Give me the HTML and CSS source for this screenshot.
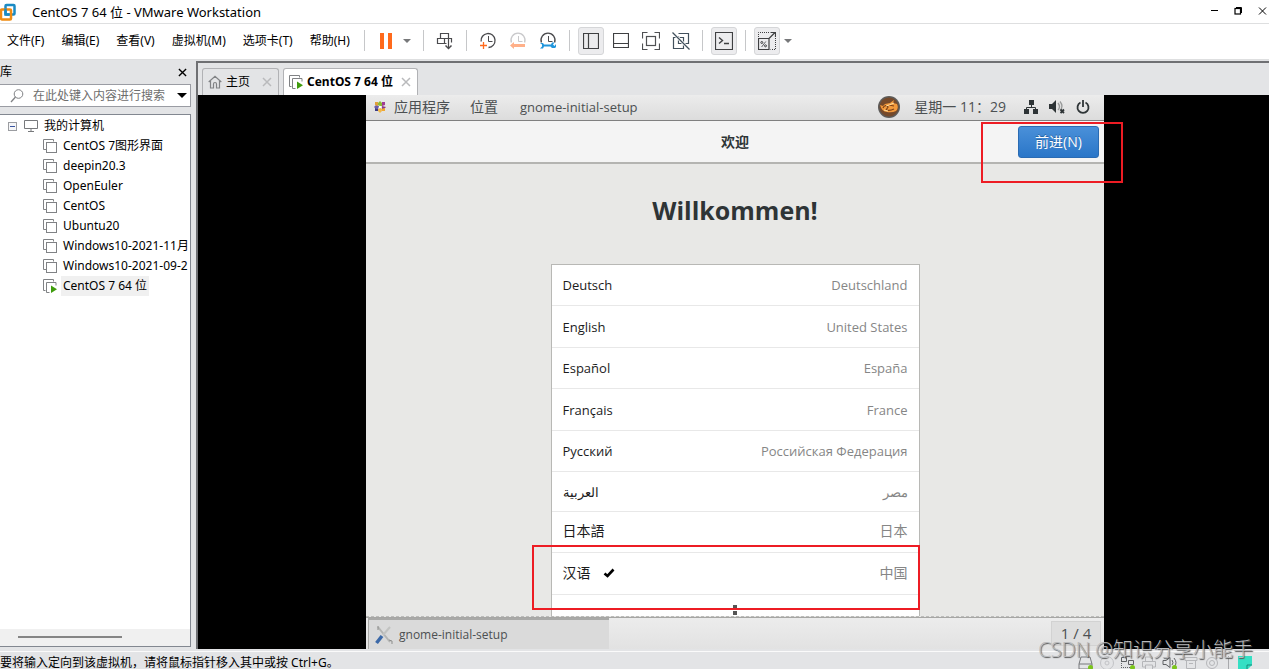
FILE: index.html
```html
<!DOCTYPE html>
<html lang="zh-CN">
<head>
<meta charset="utf-8">
<title>CentOS 7 64 位 - VMware Workstation</title>
<link rel="stylesheet" href="styles.css">
</head>
<body>
<svg class="defs" width="0" height="0" aria-hidden="true">
  <symbol id="vm" viewBox="0 0 14 14"><path d="M3.5 10.5h-3v-10h10v2" fill="none" stroke="#808285"/><rect x="3.500" y="3.500" width="10" height="10" fill="#fff" stroke="#808285"/></symbol>
  <symbol id="vmrun" viewBox="0 0 14 14"><path d="M2.500 11.500h-2v-11h10v2M6.500 13.500h-3v-10h9.500v3" fill="none" stroke="#808285"/><path d="M8 6.500l6 3.700-6 3.800z" fill="#3f9c0d"/></symbol>
  <symbol id="x" viewBox="0 0 10 10"><path d="M1 1l8 8M9 1L1 9" fill="none" stroke="currentColor" stroke-width="1.500"/></symbol>
  <symbol id="caret" viewBox="0 0 8 4"><path d="M0 0h8L4 4z" fill="currentColor"/></symbol>
</svg>
<div class="app">
  <header class="titlebar">
    <svg class="logo" width="17" height="18" viewBox="0 0 17 18" fill="none"><rect x="5.500" y="2" width="9" height="9.500" rx="1" stroke="#1a8bc4" stroke-width="2.500"/><rect x="1" y="6.500" width="10" height="10" rx="1" stroke="#f08c12" stroke-width="2.500"/><path d="M5.500 5.500v6h4" stroke="#1a8bc4" stroke-width="2.500"/></svg>
    <h1 class="title">CentOS 7 64 位 - VMware Workstation</h1>
    <div class="winctl">
      <button aria-label="最小化"><svg width="8" height="8"><path d="M0 3.500h7" stroke="#000"/></svg></button>
      <button aria-label="还原"><svg width="9" height="8" fill="none" stroke="#000"><path d="M2 .5h5.500V6"/><rect x="1" y="1.500" width="5.500" height="5.500" stroke-width="1.200"/></svg></button>
      <button aria-label="关闭"><svg width="9" height="8"><path d="M1 .5l7 7M8 .5l-7 7" stroke="#000"/></svg></button>
    </div>
  </header>

  <div class="menubar">
    <nav class="menus">
      <button>文件(F)</button><button>编辑(E)</button><button>查看(V)</button><button>虚拟机(M)</button><button>选项卡(T)</button><button>帮助(H)</button>
    </nav>
    <div class="tools">
      <span class="sep"></span>
      <button class="tool" aria-label="挂起"><svg width="14" height="16"><path d="M1 0h4v16H1zM9 0h4v16H9z" fill="#ff6a1c"/></svg></button>
      <button class="drop" aria-label="电源选项"><svg width="8" height="4"><use href="#caret"/></svg></button>
      <span class="sep"></span>
      <button class="tool" aria-label="发送 Ctrl+Alt+Del"><svg width="18" height="18" fill="none" stroke="#4a4a4d"><path d="M4.500 1.500h8v5h-8zM8.500 6.500h7v4M8.500 6.500v5h-7v-5h3M8.500 11.500h2M12.500 7v9" stroke-width="1.200"/><path d="M9.500 13.500l3 3 3-3" stroke-width="1.500"/></svg></button>
      <span class="sep"></span>
      <button class="tool" aria-label="拍摄快照"><svg width="18" height="18" fill="none" stroke="#4a4a4d"><path d="M2.100 9.500A7 7 0 1 1 9.500 15.500" stroke-width="1.300"/><path d="M9.500 4v5.500h4"/><path d="M1 13.500h7M4.500 10v7" stroke="#ff6a1c" stroke-width="1.300"/></svg></button>
      <button class="tool" aria-label="恢复快照"><svg width="18" height="18" fill="none" stroke="#c9c9cb"><path d="M2.400 10.500A7 7 0 1 1 15.600 10.500" stroke-width="1.300"/><path d="M9.500 4v5.500h4"/><path d="M1 13.500l4-3.500v2h11v3H5v2z" fill="#ffb089" stroke="none"/></svg></button>
      <button class="tool" aria-label="管理快照"><svg width="18" height="18" fill="none" stroke="#4a4a4d"><path d="M2.400 10.500A7 7 0 1 1 15.600 10.500" stroke-width="1.300"/><path d="M9.500 4v5.500h4"/><path d="M1 11h3l1 1.500h7l1-2h2.500l-1.500 2 1.500 1.500L17 12v3l-1 1h-3l-1.500-1.500H5L4 16.500H1l2-2v-2z" fill="#2196dc" stroke="none"/></svg></button>
      <span class="sep"></span>
      <button class="tool on" aria-label="显示库"><svg width="16" height="16" fill="none" stroke="#3f4042"><path d="M.5.500h15v15H.5zM5.500.5v15" stroke-width="1.200"/></svg></button>
      <button class="tool" aria-label="缩略图栏"><svg width="16" height="16" fill="none" stroke="#3f4042"><path d="M.5.500h15v14H.5zM.5 10.500h15" stroke-width="1.200"/></svg></button>
      <button class="tool" aria-label="全屏"><svg width="18" height="18" fill="none" stroke="#4f5052"><path d="M.5 6.500v-6h5M12.500.5h5v6M.5 11.500v6h5M12.500 17.500h5v-6" stroke-width="1.200"/><rect x="4.500" y="4.500" width="9" height="9" stroke-width="1.200"/></svg></button>
      <button class="tool" aria-label="Unity"><svg width="18" height="18" fill="none" stroke="#41505c"><path d="M6.500 1.500h10v10h-5M6.500 4v7.500h5M4.500 5.500h-3v11h10v-11h-4" stroke-width="1.200"/><path d="M.5.500l17 17" stroke="#fff" stroke-width="3"/><path d="M.5.500l17 17" stroke-width="1.300"/></svg></button>
      <span class="sep"></span>
      <button class="tool on" aria-label="控制台"><svg width="18" height="18" fill="none" stroke="#3f4042"><path d="M.5.500h17v17H.5z" stroke-width="1.200"/><path d="M4 5.500l3.500 3L4 11.500M9 11.500h5" stroke-width="1.400"/></svg></button>
      <span class="sep"></span>
      <button class="tool on" aria-label="缩放"><svg width="18" height="18" fill="none" stroke="#3f4042"><path d="M.5 6.500h10.500v11H.5zM11 6.500l6-6M13 .5h4.500V5" stroke-width="1.200"/><path d="M.5 5V.5h12M17.500 6v11.500h-5" stroke-dasharray="1 1"/><circle cx="3.800" cy="10.500" r="1"/><circle cx="7.500" cy="13.800" r="1"/><path d="M7.800 9.500l-4.200 5.500" stroke-width=".8"/></svg></button>
      <button class="drop" aria-label="缩放选项"><svg width="8" height="4"><use href="#caret"/></svg></button>
    </div>
  </div>

  <div class="main">
    <aside class="library">
      <div class="libhead"><h2>库</h2><button aria-label="关闭库"><svg width="9" height="9"><use href="#x"/></svg></button></div>
      <div class="search">
        <svg width="14" height="14" fill="none" stroke="#808285"><circle cx="8.500" cy="5" r="4.300"/><path d="M5.500 8L1 13" stroke-width="1.300"/></svg>
        <input type="text" aria-label="搜索" placeholder="在此处键入内容进行搜索">
        <button aria-label="搜索选项"><svg width="10" height="5"><use href="#caret"/></svg></button>
      </div>
      <div class="tree">
        <div class="root"><svg width="9" height="9"><rect x=".5" y=".5" width="8" height="8" fill="#f5f6f8" stroke="#9b9da1"/><path d="M2 4.500h5" stroke="#3a55a0"/></svg><svg width="14" height="12" fill="none" stroke="#77797c"><path d="M.5.500h13v8H.5zM7 9v2M4 11.500h6"/></svg><span>我的计算机</span></div>
        <ul>
          <li><svg><use href="#vm"/></svg><span>CentOS 7图形界面</span></li>
          <li><svg><use href="#vm"/></svg><span>deepin20.3</span></li>
          <li><svg><use href="#vm"/></svg><span>OpenEuler</span></li>
          <li><svg><use href="#vm"/></svg><span>CentOS</span></li>
          <li><svg><use href="#vm"/></svg><span>Ubuntu20</span></li>
          <li><svg><use href="#vm"/></svg><span>Windows10-2021-11月</span></li>
          <li><svg><use href="#vm"/></svg><span>Windows10-2021-09-2</span></li>
          <li class="selected"><svg><use href="#vmrun"/></svg><span>CentOS 7 64 位</span></li>
        </ul>
        <div class="hscroll"><div class="thumb"></div></div>
      </div>
    </aside>

    <section class="workspace">
      <div class="tabs">
        <div class="tab"><svg width="14" height="14" fill="none" stroke="#808285" stroke-width="1.200"><path d="M.7 7L7 1.200 13.300 7M2.500 6v7h3V9q0-1.500 1.500-1.500T8.500 9v4h3V6"/></svg><span>主页</span><button aria-label="关闭主页"><svg width="10" height="10"><use href="#x"/></svg></button></div>
        <div class="tab active"><svg width="14" height="14"><use href="#vmrun"/></svg><span>CentOS 7 64 位</span><button aria-label="关闭标签"><svg width="10" height="10"><use href="#x"/></svg></button></div>
      </div>
      <div class="console">
        <div class="guest">
          <div class="topbar">
            <svg width="12" height="12"><path d="M6 0l2 2v3H6L4 4V2z" fill="#8dbb35"/><path d="M8 1h3v3L8 5z" fill="#a03c96"/><path d="M8 5l4 1-2 2H8z" fill="#8a3a8c"/><path d="M7 8l4-1v3H8z" fill="#f0a832"/><path d="M4 8l3-1 1 3-2 2-2-2z" fill="#f2b84a"/><path d="M1 7h3v3H1z" fill="#3c3c84"/><path d="M0 6l2-2 3 1-1 3H2z" fill="#6b5ba8"/><path d="M1 1h3v4L1 4z" fill="#e0a03a"/><path d="M5 5h2v2H5z" fill="#fff"/></svg>
            <span>应用程序</span><span class="places">位置</span><span class="running">gnome-initial-setup</span>
            <svg class="ime" width="22" height="22"><circle cx="11" cy="11" r="11" fill="#5d5b59"/><circle cx="11" cy="11" r="9.500" fill="#75492a"/><path d="M2 9l3 1 2-2 5-1 4-3-1 3 4 1q2 4-1 7-4 2-9 1-5 0-7-7z" fill="#f39a3c"/><path d="M5 12q2-4 5-1l-2 3q4 1 8-1M11 9l5 1" stroke="#7c4016" stroke-width="1.200" fill="none"/><path d="M8 10l3-1 5-2M6 14l4 1" stroke="#ffe0a0" fill="none"/></svg>
            <span class="clock">星期一 11：29</span>
            <div class="tray">
              <svg width="14" height="14" fill="#2e3436"><path d="M5 0h5v5H5zM0 9h5v5H0zM9 9h5v5H9z"/><path d="M7.500 5v3M2.500 9V7.500h9V9" fill="none" stroke="#2e3436"/></svg>
              <svg width="16" height="14"><path d="M0 4h3l4-4v13L3 9H0z" fill="#2e3436"/><path d="M9 3q3 4 0 7M11 1.500q4 5 0 9" fill="none" stroke="#999b9b" stroke-width="1.300"/><path d="M11.500 9.500l3.500 3.500M15 9.500l-3.500 3.500" stroke="#2e3436" stroke-width="1.800"/></svg>
              <svg width="14" height="14" fill="none" stroke="#2e3436" stroke-width="1.800"><path d="M4.500 2.500a5.500 5.500 0 1 0 5 0M7 0v7"/></svg>
            </div>
          </div>
          <div class="headerbar"><span></span><strong>欢迎</strong><button class="next">前进(N)</button></div>
          <div class="content">
            <h2>Willkommen!</h2>
            <div class="langbox">
              <ul class="langs">
                <li><span>Deutsch</span><em>Deutschland</em></li>
                <li><span>English</span><em>United States</em></li>
                <li><span>Español</span><em>España</em></li>
                <li><span>Français</span><em>France</em></li>
                <li><span>Русский</span><em>Российская Федерация</em></li>
                <li class="arabic"><span lang="ar">العربية</span><em lang="ar">مصر</em></li>
                <li class="cjk"><span>日本語</span><em>日本</em></li>
                <li class="cjk"><span>汉语</span><svg width="12" height="10"><path d="M1.500 5.500L4.500 8 10.500 1.500" fill="none" stroke="#000" stroke-width="2.600"/></svg><em>中国</em></li>
                <li class="more"><svg width="4" height="10"><path d="M0 0h4v4H0zM0 6h4v4H0z" fill="#555"/></svg></li>
              </ul>
              <div class="mark mark-lang"></div>
            </div>
          </div>
          <div class="taskbar">
            <button class="task"><svg width="18" height="20" fill="none"><path d="M3 2l12 15" stroke="#b4b5b3" stroke-width="2"/><path d="M15 2L8 10" stroke="#c2c3c1" stroke-width="2"/><path d="M1.500 18L7 11" stroke="#3c69a8" stroke-width="3.500"/><path d="M14 15l3 1v3M3 5V1" stroke="#8c8d8b"/></svg>gnome-initial-setup</button>
            <span class="pager">1 / 4</span>
          </div>
          <div class="mark mark-next"></div>
        </div>
      </div>
    </section>
  </div>

  <footer class="status">
    <span>要将输入定向到该虚拟机，请将鼠标指针移入其中或按 Ctrl+G。</span>
    <div class="devices">
      <svg viewBox="0 0 16 14" stroke="#77797c"><path d="M3 1h9l2 7v5H1V8zM1 8h13"/><circle cx="12.500" cy="11.500" r="2.500" fill="#7bc51c" stroke="none"/></svg>
      <svg viewBox="0 0 16 14" stroke="#c2c3c6"><circle cx="8" cy="7" r="6.500"/><circle cx="8" cy="7" r="2"/></svg>
      <svg viewBox="0 0 16 14" stroke="#5f6164"><path d="M1.500 1.500h5v4h-5zM8.500 4.500h5v4h-5z"/><path d="M1.500 5v7M1 11.500h10" stroke-dasharray="1 1"/><circle cx="12.500" cy="11.500" r="2.500" fill="#7bc51c" stroke="none"/></svg>
      <svg viewBox="0 0 16 14" stroke="#b5b6b9"><path d="M4.500 5V1h7v4M4 11H1.500V5.500h13V11H12M4.500 9h7v4.500h-7z"/></svg>
      <svg viewBox="0 0 16 14" stroke="#5f6164"><path d="M1 4.500h3l4-3v10l-4-3H1zM10 4q2 3 0 5M12 2q4 5 0 9"/><circle cx="12.500" cy="11.500" r="2.500" fill="#7bc51c" stroke="none"/></svg>
      <svg viewBox="0 0 16 14" stroke="#b5b6b9"><path d="M2 1.500h12v3H2zM3.500 4.500v8h9v-8M6 7.500h4"/></svg>
      <svg viewBox="0 0 16 14" stroke="#b5b6b9"><circle cx="8" cy="7" r="5.500"/><circle cx="8" cy="7" r="2.500"/></svg>
      <i></i>
      <svg viewBox="0 0 16 14"><path d="M1 0h14v9l-5 5H1z" fill="#35dfc4"/><path d="M15 9h-5v5" stroke="#168b79"/></svg>
    </div>
  </footer>
  <div class="watermark">CSDN @知识分享小能手</div>
</div>
</body>
</html>
```
FILE: styles.css
```css
* { box-sizing: border-box; }
body {
  margin: 0;
  font: 12px/20px "Noto Sans", "Noto Sans CJK SC", sans-serif;
  color: #000;
}
button {
  padding: 0;
  border: 0;
  background: none;
  font: inherit;
  color: inherit;
}
h1, h2 { margin: 0; font: inherit; }
ul { margin: 0; padding: 0; list-style: none; }
svg { display: block; flex: none; }
.defs { position: absolute; }
.app {
  position: relative;
  display: flex;
  flex-direction: column;
  height: 100vh;
  overflow: hidden;
  background: #e3e4e6;
}

/* Title bar */
.titlebar {
  display: flex;
  align-items: center;
  height: 24px;
  border-bottom: 1px solid #dedfe0;
  background: #fff;
}
.title { flex: 1; margin-left: 15px; font-size: 13px; }
.winctl { display: flex; gap: 15px; padding: 0 2px 2px 0; }

/* Menu and toolbar */
.menubar {
  display: flex;
  height: 36px;
  padding-bottom: 2px;
  border-bottom: 1px solid #dedfe0;
  background: #fff;
}
.menus {
  display: flex;
  flex: 0 0 356px;
  align-items: center;
  gap: 17px;
  padding-left: 7px;
  white-space: nowrap;
}
.tools { display: flex; align-items: center; gap: 4px; }
.sep {
  width: 1px;
  height: 21px;
  margin: 0 4px;
  background: #c6c7c9;
}
.tools .sep:first-child { margin-left: 8px; }
.tool, .drop {
  display: flex;
  align-items: center;
  justify-content: center;
  height: 28px;
}
.tool { width: 26px; }
.drop { width: 16px; margin-left: -4px; color: #77787a; }
.on {
  border: 1px solid #d5d6d8;
  border-radius: 3px;
  background: #ececee;
}

/* Library */
.main { display: flex; flex: 1; min-height: 0; }
.library {
  display: flex;
  flex-direction: column;
  width: 191px;
  flex: none;
  padding-bottom: 4px;
}
.libhead {
  display: flex;
  justify-content: space-between;
  align-items: center;
  height: 24px;
  padding-right: 4px;
}
.search {
  display: flex;
  align-items: center;
  height: 23px;
  padding: 0 3px 0 10px;
  border: 1px solid #9a9ca3;
  border-left: 0;
  background: #fff;
}
.search input {
  flex: 1;
  min-width: 0;
  height: 20px;
  margin-left: 9px;
  padding: 0;
  border: 0;
  outline: 0;
  background: none;
  font: inherit;
}
.search input::placeholder { color: #6d6d6d; opacity: 1; }
.tree {
  display: flex;
  flex-direction: column;
  flex: 1;
  margin-top: 7px;
  padding-top: 1px;
  border: 1px solid #828790;
  border-left: 0;
  background: #fff;
  overflow: hidden;
  white-space: nowrap;
}
.root { display: flex; align-items: center; padding-left: 8px; }
.root svg + svg { margin: 0 6px 0 7px; }
.tree li { display: flex; align-items: center; padding-left: 43px; }
.tree li svg { width: 14px; height: 14px; margin-right: 4px; }
.tree li span { height: 20px; padding: 0 2px; }
.selected span { background: #f0f0f0; }
.hscroll {
  margin-top: auto;
  height: 17px;
  padding: 7px 68px 0 18px;
  background: #f0f0f0;
}
.thumb { height: 2px; background: #858585; }

/* Workspace */
.workspace {
  display: flex;
  flex-direction: column;
  flex: 1;
  min-width: 0;
  margin: 1px 0 2px 5px;
  border: solid #6f7073;
  border-width: 2px 0 0 2px;
}
.tabs {
  display: flex;
  gap: 4px;
  height: 32px;
  padding: 5px 0 0 4px;
}
.tab {
  display: flex;
  align-items: center;
  width: 77px;
  padding: 0 6px 0 5px;
  border: 1px solid #b1b2b5;
  border-bottom: 0;
  border-radius: 3px 3px 0 0;
}
.tab span { flex: 1; margin-left: 4px; white-space: nowrap; }
.tab button { color: #b9babc; }
.active {
  width: 135px;
  background: #fff;
  font-weight: 700;
}
.console {
  display: flex;
  justify-content: center;
  flex: 1;
  min-height: 0;
  padding-left: 3px;
  background: #000;
}

/* Guest desktop */
.guest {
  position: relative;
  display: flex;
  flex-direction: column;
  flex: 0 1 738px;
  background: #e8e8e6;
  color: #4c5052;
  font: 13px/20px "Open Sans", "Noto Sans CJK SC", sans-serif;
}
.topbar {
  display: flex;
  align-items: center;
  height: 26px;
  flex: none;
  padding: 0 14px 2px 8px;
  border-bottom: 1px solid #808080;
  background: linear-gradient(#ececec, #dcdcdc);
  font-size: 14px;
}
.topbar span { margin-left: 8px; }
.topbar .places { margin-left: 20px; }
.topbar .running { margin-left: 22px; font-size: 13px; }
.ime { margin: 0 6px 0 auto; }
.topbar .clock { font-family: "Open Sans", "Noto Sans CJK TC", sans-serif; }
.tray { display: flex; gap: 11px; margin-left: 18px; }
.headerbar {
  display: grid;
  grid-template-columns: 1fr auto 1fr;
  align-items: center;
  height: 43px;
  flex: none;
  padding: 0 5px;
  border-bottom: 2px solid #b4b4b1;
  background: #f4f4f4;
}
.headerbar strong { color: #2e3436; font-size: 14px; }
.next {
  justify-self: end;
  width: 81px;
  height: 32px;
  border: 1px solid #2a6bb3;
  border-radius: 3px;
  background: linear-gradient(#4a90d9, #2a76c8);
  color: #fff;
  font-size: 14px;
  text-shadow: 0 -1px #2a65a4;
}
.content {
  display: flex;
  flex-direction: column;
  align-items: center;
  flex: 1;
  min-height: 0;
  border-bottom: 1px dashed #bcbcba;
}
.content h2 {
  flex: none;
  margin: 28px 0 36px;
  color: #2e3436;
  font-size: 25px;
  font-weight: 700;
  line-height: 36px;
}
.langbox {
  position: relative;
  width: 50%;
  flex: 1;
  min-height: 0;
}
.langs {
  height: 100%;
  overflow: hidden;
  border: 1px solid #b8b8b5;
  border-bottom: 0;
  background: #fff;
}
.langs li {
  display: flex;
  align-items: center;
  height: 41px;
  padding: 0 11px;
  border-bottom: 1px solid #e8e8e8;
  color: #1c1c1c;
}
.langs li:nth-child(even) { height: 42px; }
.langs li.arabic { height: 40px; }
.langs .cjk { padding-bottom: 2px; font-size: 14px; }
.langs li svg { margin-left: 12px; }
.langs em { margin-left: auto; color: #868686; font-style: normal; }
.langs .more { justify-content: center; align-items: flex-start; padding-top: 10px; }
.langs .more svg { margin: 0; }
.taskbar {
  display: flex;
  justify-content: space-between;
  height: 32px;
  flex: none;
  padding: 0 3px 0 2px;
  border-top: 1px solid #a6a6a4;
  background: linear-gradient(#ececec, #e2e2e2);
}
.task {
  display: flex;
  align-items: center;
  gap: 6px;
  width: 241px;
  padding-left: 6px;
  border: solid #a9a9a7;
  border-width: 2px 0 0 1px;
  background: #dadada;
  font-size: 12px;
}
.pager {
  width: 50px;
  height: 25px;
  margin-top: 3px;
  border: 1px solid #d2d2d2;
  background: #dedede;
  font-size: 15px;
  line-height: 22px;
  text-align: center;
}

/* Red highlight frames */
.mark { position: absolute; border: 2px solid #ed1c24; pointer-events: none; }
.mark-next { top: 27px; right: -19px; width: 142px; height: 61px; }
.mark-lang { right: 0; bottom: 6px; left: -19px; height: 65px; }

/* Status bar */
.status {
  display: flex;
  justify-content: space-between;
  height: 18px;
  flex: none;
  padding: 4px 16px 0 0;
  border-top: 1px solid #fafafa;
  line-height: 13px;
}
.devices { display: flex; gap: 5px; }
.devices svg { width: 16px; height: 14px; fill: none; }
.devices i { width: 1px; margin: 0 3px; background: #a8a9ac; }
.watermark {
  position: absolute;
  right: 16px;
  bottom: 4px;
  color: #b9babc;
  font: 20px/30px "Open Sans", "Noto Sans CJK SC", sans-serif;
  font-weight: 300;
  text-shadow: 1px 1px 1px #505050;
}
```
